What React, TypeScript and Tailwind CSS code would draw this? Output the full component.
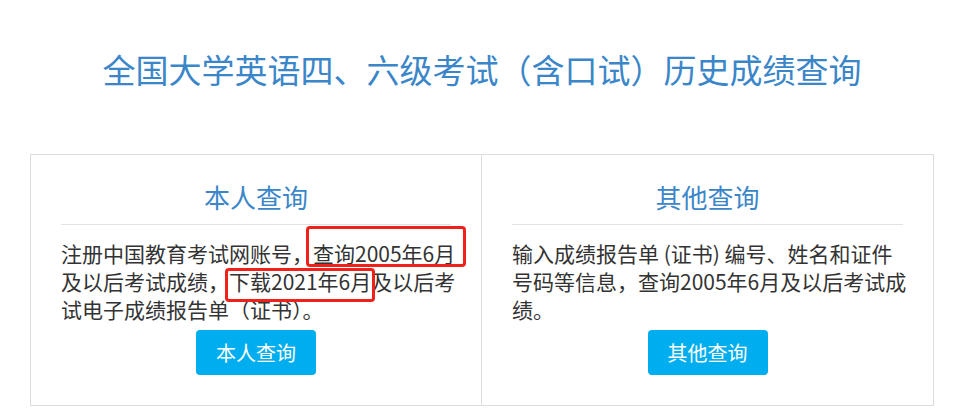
import React from 'react';

const font = { fontFamily: '"Microsoft YaHei", "Noto Sans CJK SC", "Noto Sans", sans-serif' };

// red annotation boxes drawn over the text; they do not take up space
const Mark: React.FC<{ children: React.ReactNode; box: string }> = ({ children, box }) => (
  <span className="relative">
    {children}
    <span className={`absolute border-[3px] border-[#f0201a] rounded-[4px] pointer-events-none ${box}`} />
  </span>
);

interface PanelProps {
  title: string;
  button: string;
  children: React.ReactNode;
  last?: boolean;
}

const Panel: React.FC<PanelProps> = ({ title, button, children, last }) => (
  <div className={`w-1/2 pl-[30px] pr-[20px] pt-[24px] pb-[30px] ${last ? '' : 'border-r border-[#dddddd]'}`}>
    <div className="mr-[10px]">
      <h2 className="text-center text-[26px] leading-[36px] text-[#3b86c8]">{title}</h2>
      <div className="mt-[9px] h-px bg-[#e3e3e3]" />
    </div>
    <p className="mt-[14px] w-[396px] text-[21px] leading-[28px] text-[#333333]">{children}</p>
    <div className="mr-[10px] mt-[7px] flex justify-center">
      <button className="w-[120px] h-[45px] rounded-[4px] bg-[#00aeef] text-white text-[20px]">
        {button}
      </button>
    </div>
  </div>
);

export default function App() {
  return (
    <div className="w-[964px] h-[418px] bg-white overflow-hidden" style={font}>
      <h1 className="mt-[45px] text-center text-[33px] leading-[48px] text-[#3b86c8]">
        全国大学英语四、六级考试（含口试）历史成绩查询
      </h1>

      <div className="mx-[30px] mt-[61px] flex border border-[#dddddd]">
        <Panel title="本人查询" button="本人查询">
          注册中国教育考试网账号，
          <Mark box="-top-[12px] bottom-[1px] -left-[7px] -right-[11px]">查询2005年6月</Mark>
          及以后考试成绩，
          <Mark box="top-[2px] -bottom-[6px] -left-[4px] -right-[4px]">下载2021年6月</Mark>
          及以后考试电子成绩报告单（证书）。
        </Panel>
        <Panel title="其他查询" button="其他查询" last>
          输入成绩报告单 (证书) 编号、姓名和证件号码等信息，查询2005年6月及以后考试成绩。
        </Panel>
      </div>
    </div>
  );
}
